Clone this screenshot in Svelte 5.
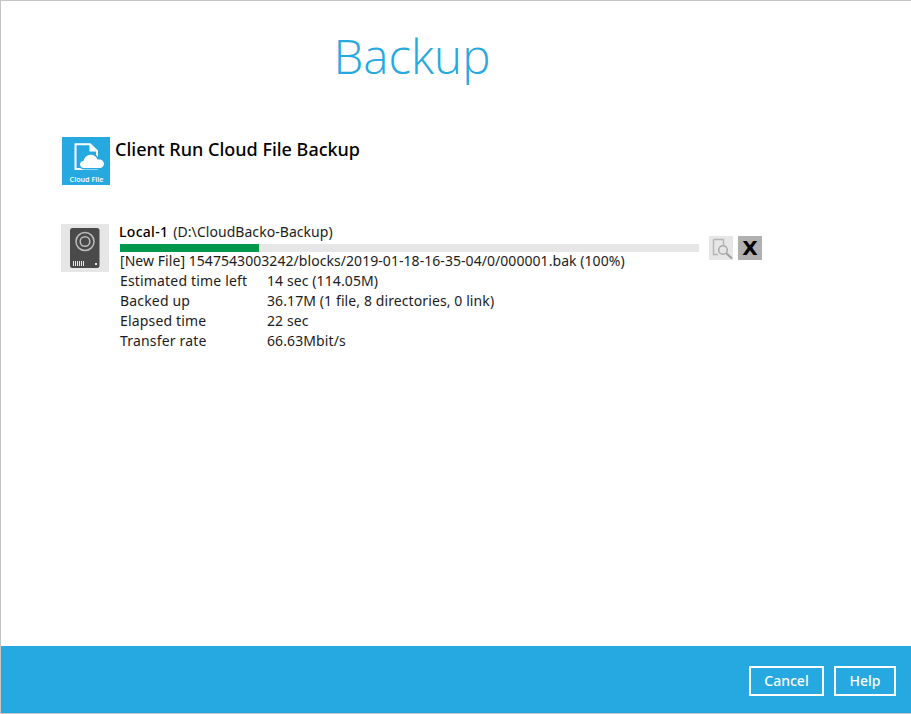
<script>
  const stats = [
    { label: 'Estimated time left', value: '14 sec (114.05M)' },
    { label: 'Backed up', value: '36.17M (1 file, 8 directories, 0 link)' },
    { label: 'Elapsed time', value: '22 sec' },
    { label: 'Transfer rate', value: '66.63Mbit/s' }
  ];
  let progress = 24;
</script>

<main class="window">
  <div class="content">
    <h1 class="title">Backup</h1>

    <div class="set">
      <div class="set-icon">
        <svg width="48" height="48" viewBox="0 0 48 48">
          <rect width="48" height="48" fill="#26a9e0" />
          <path d="M35 20V14L28 7.200H13.500V32H36" fill="none" stroke="#fff" stroke-width="2" />
          <path d="M27.500 7.500L34.500 14.500H27.500Z" fill="#fff" />
          <path d="M22 31.500c-2.600 0-4.500-1.800-4.500-4 0-2.100 1.500-3.700 3.700-3.900 .8-3.700 3.800-6.300 7.400-6.300 3.200 0 5.900 1.900 7 4.800 .5-.1 1-.2 1.500-.2 3 0 5.400 2.300 5.400 4.900 0 2.600-2.300 4.700-5 4.700z" fill="#26a9e0" stroke="#26a9e0" stroke-width="2" />
          <path d="M22 31c-2.400 0-4-1.600-4-3.500 0-1.900 1.400-3.400 3.600-3.500 .8-3.700 3.700-6.200 7.100-6.200 3.100 0 5.700 1.800 6.800 4.800 .5-.1 1-.2 1.500-.2 2.900 0 5 2 5 4.400 0 2.400-2 4.200-4.500 4.200z" fill="#fff" />
          <text x="24.500" y="44.500" text-anchor="middle" class="icon-label">Cloud File</text>
        </svg>
      </div>
      <h2 class="set-name">Client Run Cloud File Backup</h2>
    </div>

    <div class="dest">
      <div class="dest-icon">
        <svg width="48" height="48" viewBox="0 0 48 48">
          <rect width="48" height="48" fill="#e6e6e6" />
          <rect x="9" y="4" width="29.500" height="40" rx="2.500" fill="#4a4a4a" />
          <circle cx="24" cy="17.500" r="9" fill="none" stroke="#bdbdbd" stroke-width="1.500" />
          <circle cx="24" cy="17.500" r="4.800" fill="none" stroke="#bdbdbd" stroke-width="1.500" />
          <path d="M12.500 37v5M14.500 37v5M16.500 37v5M18.500 37v5M20.500 37v5M22.500 37v5" stroke="#e8e8e8" stroke-width="1" />
          <rect x="34" y="39" width="2" height="2" fill="#e8e8e8" />
        </svg>
      </div>

      <div class="dest-body">
        <div class="dest-name"><span class="dest-title">Local-1</span><span class="dest-path">(D:\CloudBacko-Backup)</span></div>
        <div class="bar"><div class="bar-fill" style="width: {progress}%"></div></div>
        <div class="line">[New File] 1547543003242/blocks/2019-01-18-16-35-04/0/000001.bak (100%)</div>
        {#each stats as s}
          <div class="stat">
            <span class="stat-label">{s.label}</span>
            <span class="stat-value">{s.value}</span>
          </div>
        {/each}
      </div>

      <div class="actions">
        <div class="btn-log">
          <svg width="25" height="25" viewBox="0 0 25 25">
            <path d="M4.500 3.500H14.500V9M4.500 3.500V18.500H9" fill="none" stroke="#b4b4b4" stroke-width="1.400" />
            <circle cx="14" cy="14" r="4.300" fill="none" stroke="#a8a8a8" stroke-width="1.500" />
            <path d="M17.500 17.500L23 22.500" stroke="#a0a0a0" stroke-width="2" />
          </svg>
        </div>
        <div class="btn-stop">X</div>
      </div>
    </div>
  </div>

  <footer class="footer">
    <button class="btn cancel">Cancel</button>
    <button class="btn help">Help</button>
  </footer>
</main>

<style>
  :global(body) {
    margin: 0;
    background: #fff;
  }

  .window {
    box-sizing: border-box;
    width: 911px;
    height: 714px;
    border: 1px solid #c4c4c4;
    border-right: 0;
    display: flex;
    flex-direction: column;
    font-family: "Noto Sans", sans-serif;
    font-size: 14px;
    color: #1c1c1c;
  }

  .content {
    flex: 1;
    padding: 0 0 0 60px;
  }

  .title {
    margin: 21px 0 0 0;
    padding-right: 148px;
    text-align: center;
    font-family: "Open Sans", sans-serif;
    font-weight: 300;
    font-size: 47.500px;
    line-height: 68px;
    color: #26a9e0;
  }

  .set {
    display: flex;
    margin-top: 47px;
    margin-left: 1px;
    height: 48px;
  }

  .set-icon,
  .dest-icon {
    width: 48px;
    height: 48px;
    flex: none;
  }

  .set-name {
    margin: -1px 0 0 5px;
    font-size: 18px;
    font-weight: 500;
    line-height: 26px;
    color: #000;
  }

  .icon-label {
    font-family: "Open Sans", sans-serif;
    font-size: 7.200px;
    font-weight: 600;
    fill: #fff;
  }

  .dest {
    display: flex;
    margin-top: 39px;
  }

  .dest-body {
    width: 580px;
    margin-left: 10px;
    line-height: 20px;
  }

  .dest-name {
    line-height: 16px;
  }

  .dest-title {
    font-weight: 500;
    color: #000;
    letter-spacing: 0.3px;
    margin-right: 5px;
  }

  .dest-path {
    letter-spacing: 0.05px;
  }

  .bar {
    height: 8px;
    background: #e6e6e6;
    margin: 4px 0 -1px 1px;
  }

  .bar-fill {
    height: 100%;
    background: #00984a;
  }

  .line {
    margin-left: 1px;
    letter-spacing: 0.055px;
  }

  .stat {
    display: flex;
    margin-left: 1px;
  }

  .stat-label {
    width: 147px;
    flex: none;
    letter-spacing: 0.17px;
  }

  .stat-value {
    letter-spacing: 0.1px;
  }

  .actions {
    display: flex;
    gap: 5px;
    margin: 12px 0 0 10px;
    height: 24px;
  }

  .btn-log {
    width: 24px;
    height: 24px;
    background: #e6e6e6;
  }

  .btn-stop {
    width: 24px;
    height: 24px;
    background: #b0b0b0;
    color: #000;
    font-family: "DejaVu Sans", sans-serif;
    font-weight: 700;
    font-size: 20px;
    line-height: 24px;
    text-align: center;
  }

  .footer {
    height: 67px;
    flex: none;
    background: #26a9e0;
    display: flex;
    justify-content: flex-end;
    gap: 10px;
    padding: 20px 15px 0 0;
    box-sizing: border-box;
  }

  .btn {
    height: 30px;
    box-sizing: border-box;
    border: 2px solid #fff;
    background: transparent;
    color: #fff;
    font-family: "Noto Sans", sans-serif;
    font-size: 14px;
    font-weight: 500;
    padding: 0 0 2px;
  }

  .cancel {
    width: 75px;
  }

  .help {
    width: 62px;
  }
</style>
